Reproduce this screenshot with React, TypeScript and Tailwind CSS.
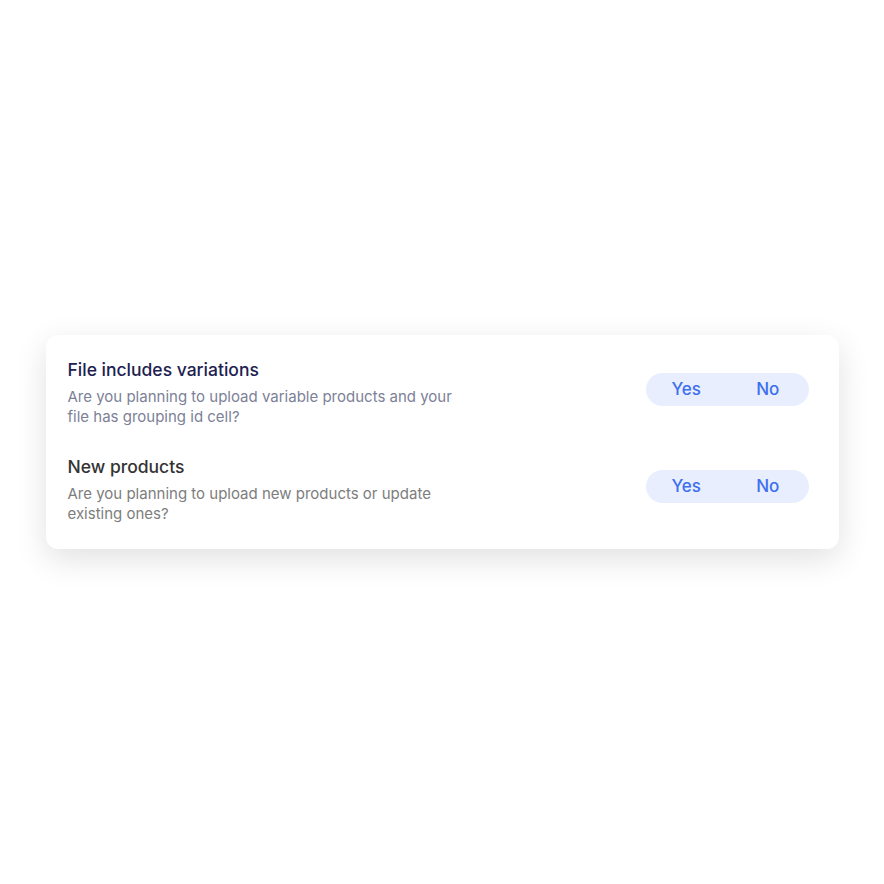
import { useState } from "react";

type Choice = "yes" | "no" | null;

type Question = {
  id: string;
  title: string;
  description: string;
  titleColor: string;
  descColor: string;
};

const questions: Question[] = [
  {
    id: "variations",
    title: "File includes variations",
    description:
      "Are you planning to upload variable products and your file has grouping id cell?",
    titleColor: "text-[#1c2150]",
    descColor: "text-[#7c8197]",
  },
  {
    id: "newProducts",
    title: "New products",
    description:
      "Are you planning to upload new products or update existing ones?",
    titleColor: "text-[#333333]",
    descColor: "text-[#7d7d7d]",
  },
];

function YesNo({
  value,
  onChange,
}: {
  value: Choice;
  onChange: (v: Choice) => void;
}) {
  return (
    <div className="mt-[14px] flex h-[33px] w-[163px] shrink-0 items-center rounded-full bg-[#e8eefd] text-[17px] font-medium text-[#3d6ff0]">
      <button
        type="button"
        onClick={() => onChange("yes")}
        className={`h-full flex-1 rounded-full ${value === "yes" ? "bg-[#d6e0fb]" : ""}`}
      >
        Yes
      </button>
      <button
        type="button"
        onClick={() => onChange("no")}
        className={`h-full flex-1 rounded-full ${value === "no" ? "bg-[#d6e0fb]" : ""}`}
      >
        No
      </button>
    </div>
  );
}

export default function App() {
  const [answers, setAnswers] = useState<Record<string, Choice>>({
    variations: null,
    newProducts: null,
  });

  return (
    <div className="flex h-[884px] w-full items-center justify-center bg-white font-['Inter','Liberation_Sans',sans-serif]">
      <div className="flex w-[793px] flex-col gap-[29px] rounded-[12px] bg-white pb-[25px] pl-[22px] pr-[30px] pt-[24px] shadow-[0_10px_32px_rgba(0,0,0,0.12)]">
        {questions.map((q) => (
          <div key={q.id} className="flex items-start justify-between">
            <div className="w-[395px]">
              <h3 className={`text-[17.5px] font-medium leading-[22px] ${q.titleColor}`}>
                {q.title}
              </h3>
              <p className={`mt-[6px] text-[15px] leading-[20px] ${q.descColor}`}>
                {q.description}
              </p>
            </div>
            <YesNo
              value={answers[q.id]}
              onChange={(v) => setAnswers({ ...answers, [q.id]: v })}
            />
          </div>
        ))}
      </div>
    </div>
  );
}
